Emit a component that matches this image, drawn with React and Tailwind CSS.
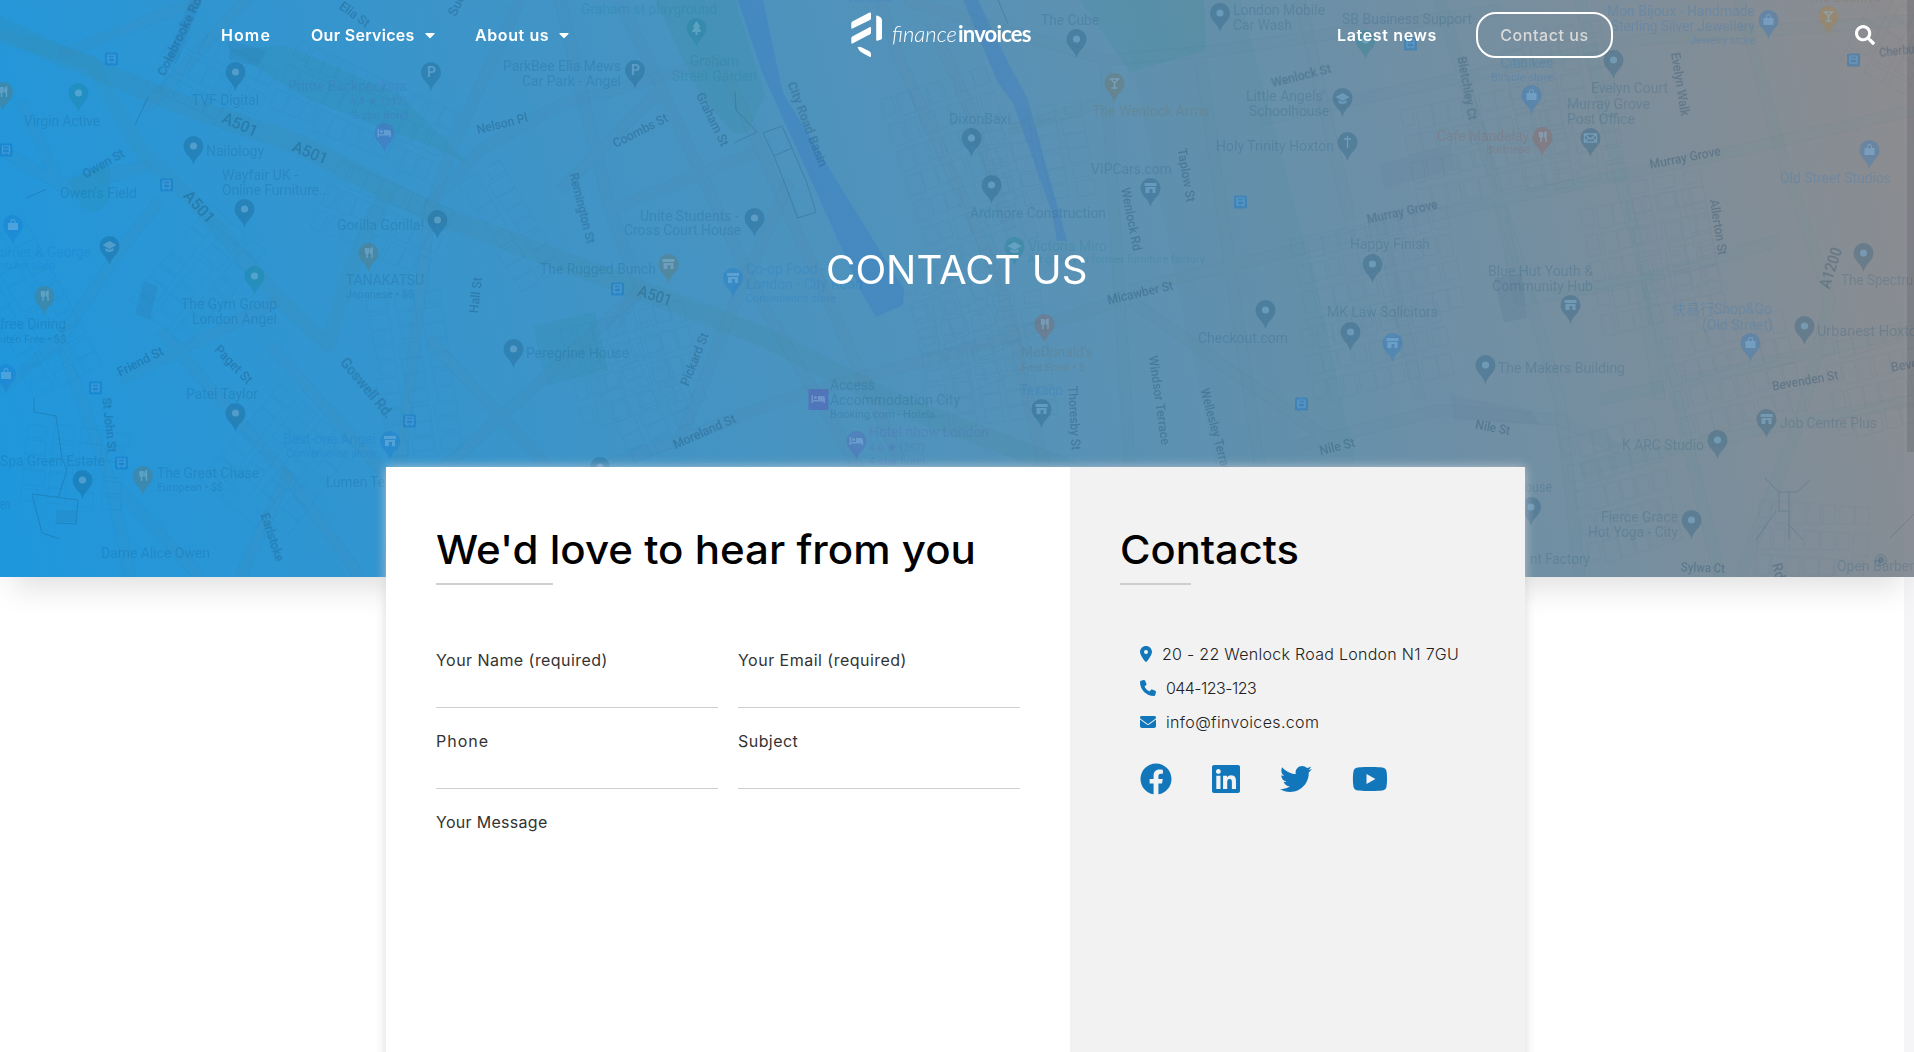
import React from "react";
import { FaCaretDown, FaSearch, FaFacebook, FaLinkedin, FaTwitter, FaYoutube } from "react-icons/fa";
import { FaLocationDot, FaPhone, FaEnvelope } from "react-icons/fa6";

const DARK = "#0b4a72";
const BLUE = "#0a6fd0";
const PURPLE = "#5a4fb8";
const BROWN = "#7a6238";
const TEAL = "#0a7a86";
const RED = "#a04a38";

/* label, x, baseline, width, size, colour */
const PLACES = [
  ["Virgin Active", 24, 126, 76, 14, DARK],
  ["TVF Digital", 192, 105, 67, 14, DARK],
  ["Prime Backpackers", 288, 91, 119, 14, PURPLE],
  ["4.1 ★ (212)", 350, 105, 57, 11, PURPLE],
  ["2-star hotel", 352, 119, 56, 11, PURPLE],
  ["Nailology", 206, 156, 58, 14, DARK],
  ["Wayfair UK -", 222, 180, 76, 14, DARK],
  ["Online Furniture...", 222, 195, 108, 14, DARK],
  ["Owen's Field", 60, 198, 77, 14, DARK],
  ["Gorilla Gorilla!", 337, 230, 87, 14, DARK],
  ["TANAKATSU", 346, 285, 78, 14, DARK],
  ["Japanese • $$", 346, 298, 68, 11, DARK],
  ["urner & George", 0, 257, 91, 14, BLUE],
  ["utcher shop", 0, 269, 55, 11, BLUE],
  ["ParkBee Elia Mews", 503, 71, 118, 14, DARK],
  ["Car Park - Angel", 522, 86, 99, 14, DARK],
  ["Graham st playground", 581, 14, 136, 14, TEAL],
  ["The Rugged Bunch", 540, 274, 116, 14, DARK],
  ["The Gym Group", 181, 309, 96, 14, DARK],
  ["London Angel", 192, 324, 85, 14, DARK],
  ["free Dining", 0, 329, 66, 14, DARK],
  ["uten Free • $$", 0, 343, 66, 11, DARK],
  ["Patel Taylor", 186, 399, 72, 14, DARK],
  ["Best-one Angel", 283, 444, 93, 14, BLUE],
  ["Convenience store", 286, 457, 90, 11, BLUE],
  ["Spa Green Estate", 0, 466, 105, 14, DARK],
  ["The Great Chase", 157, 478, 102, 14, DARK],
  ["European • $$", 157, 491, 66, 11, DARK],
  ["Lumen Te", 326, 487, 59, 14, DARK],
  ["Dame Alice Owen", 101, 558, 109, 14, DARK],
  ["en", 0, 509, 10, 14, DARK],
  ["Peregrine House", 526, 358, 103, 14, DARK],
  ["Graham", 690, 66, 49, 14, TEAL],
  ["Street Garden", 672, 81, 85, 14, TEAL],
  ["Unite Students -", 640, 221, 99, 14, DARK],
  ["Cross Court House", 624, 235, 117, 14, DARK],
  ["Co-op Food -", 746, 274, 79, 14, BLUE],
  ["London - City Road", 746, 289, 117, 14, BLUE],
  ["Convenience store", 746, 302, 90, 11, BLUE],
  ["Tea store", 848, 2, 44, 11, BLUE],
  ["The Cube", 1041, 25, 58, 14, DARK],
  ["London Mobile", 1233, 15, 92, 14, DARK],
  ["Car Wash", 1233, 30, 59, 14, DARK],
  ["The Wenlock Arms", 1092, 116, 117, 14, BROWN],
  ["DixonBaxi", 949, 124, 62, 14, DARK],
  ["Ardmore Construction", 970, 218, 136, 14, DARK],
  ["VIPCars.com", 1091, 174, 81, 14, DARK],
  ["Victoria Miro", 1028, 251, 79, 14, TEAL],
  ["Art gallery in former furniture factory", 1028, 263, 177, 11, TEAL],
  ["Little Angels'", 1246, 101, 79, 14, DARK],
  ["Schoolhouse", 1249, 116, 80, 14, DARK],
  ["Holy Trinity Hoxton", 1216, 151, 118, 14, DARK],
  ["Access", 830, 390, 45, 14, DARK],
  ["Accommodation City", 830, 405, 130, 14, DARK],
  ["Booking.com - Hotels", 830, 418, 105, 11, DARK],
  ["Hotel nhow London", 869, 437, 120, 14, PURPLE],
  ["4.6 ★ (397)", 869, 451, 56, 11, PURPLE],
  ["4-star hotel", 869, 465, 56, 11, PURPLE],
  ["McDonald's", 1021, 357, 72, 14, BROWN],
  ["Fast Food • $", 1021, 371, 64, 11, BROWN],
  ["Texaco", 1020, 395, 43, 14, BLUE],
  ["Checkout.com", 1198, 343, 90, 14, DARK],
  ["SB Business Support", 1342, 24, 130, 14, DARK],
  ["Mon Bijoux - Handmade", 1607, 16, 148, 14, BLUE],
  ["Sterling Silver Jewellery", 1611, 31, 144, 14, BLUE],
  ["Jewelry store", 1690, 44, 65, 11, BLUE],
  ["The Beehive", 1807, 2, 74, 14, BROWN],
  ["Citibikes", 1500, 68, 53, 14, BLUE],
  ["Bicycle store", 1491, 81, 62, 11, BLUE],
  ["Evelyn Court", 1591, 93, 77, 14, DARK],
  ["Murray Grove", 1567, 109, 83, 14, DARK],
  ["Post Office", 1567, 124, 68, 14, DARK],
  ["Cafe Mandalay", 1437, 141, 92, 14, RED],
  ["Burmese", 1486, 153, 44, 11, RED],
  ["Old Street Studios", 1780, 183, 111, 14, BLUE],
  ["Happy Finish", 1350, 249, 80, 14, DARK],
  ["The Spectrum", 1841, 285, 84, 14, DARK],
  ["Blue Hut Youth &", 1488, 276, 105, 14, DARK],
  ["Community Hub", 1492, 291, 101, 14, DARK],
  ["MK Law Solicitors", 1327, 317, 111, 14, DARK],
  ["The Makers Building", 1498, 373, 127, 14, DARK],
  ["快易行Shop&Go", 1672, 314, 100, 14, BLUE],
  ["(Old Street)", 1702, 330, 71, 14, BLUE],
  ["Urbanest Hoxton", 1817, 336, 108, 14, DARK],
  ["Job Centre Plus", 1780, 428, 97, 14, DARK],
  ["K ARC Studio", 1622, 450, 82, 14, DARK],
  ["Fierce Grace", 1601, 522, 77, 14, DARK],
  ["Hot Yoga - City", 1588, 537, 90, 14, DARK],
  ["ouse", 1525, 492, 27, 14, DARK],
  ["nt Factory", 1530, 564, 60, 14, DARK],
  ["Open Barber", 1837, 571, 77, 14, DARK],
];

/* label, centre x, centre y, rotation, width, size */
const ROADS = [
  ["A501", 240, 125, 24, 37, 16], ["A501", 310, 153, 22, 37, 16], ["A501", 199, 207, 48, 38, 16], ["A501", 655, 296, 18, 35, 16],
  ["Colebrooke Row", 181, 32, -64, 95, 13], ["Elia St", 355, 14, 36, 34, 13], ["Owen St", 103, 163, -29, 46, 13],
  ["Nelson Pl", 502, 123, -14, 52, 13], ["Coombs St", 640, 130, -27, 60, 13], ["Remington St", 583, 208, 76, 72, 13],
  ["Hall St", 475, 295, -84, 36, 13], ["Friend St", 140, 361, -27, 50, 13], ["Paget St", 234, 364, 46, 48, 13],
  ["Goswell Rd.", 367, 388, 50, 74, 14], ["St John St", 110, 425, 84, 55, 13], ["Earlstoke", 273, 537, 72, 50, 13],
  ["Graham St", 713, 119, 64, 58, 13], ["City Road Basin", 808, 124, 69, 90, 12], ["Taplow St", 1187, 175, 80, 54, 13],
  ["Wenlock Rd", 1132, 219, 79, 64, 13], ["Micawber St", 1140, 292, -13, 67, 13], ["Wenlock St", 1301, 75, -14, 61, 13],
  ["Pickard St", 694, 359, -68, 56, 13], ["Moreland St", 704, 431, -24, 67, 13], ["Thoresby St", 1075, 418, 87, 64, 13],
  ["Windsor Terrace", 1160, 400, 82, 90, 13], ["Wellesley Terrace", 1217, 433, 75, 92, 13], ["Bletchley Ct", 1468, 88, 80, 64, 13],
  ["Evelyn Walk", 1681, 84, 81, 64, 13], ["Murray Grove", 1685, 157, -11, 72, 13], ["Murray Grove", 1402, 211, -12, 72, 13],
  ["Allerton St", 1719, 227, 81, 56, 13], ["A1200", 1831, 268, -72, 42, 16], ["Nile St", 1493, 427, 11, 35, 13],
  ["Nile St", 1337, 446, -14, 36, 13], ["Bevenden St", 1805, 380, -10, 67, 13], ["Bevenden", 1918, 362, -10, 55, 13],
  ["Cherbury St", 1908, 49, -6, 58, 13], ["Sylwa Ct", 1703, 567, 2, 44, 13], ["Rd", 1779, 571, 75, 16, 14], ["Sudeley", 461, -6, -65, 46, 13],
];

/* centre x, centre y of the head, colour, symbol */
const PINS = [
  [3, 92, BROWN, "fork"], [78.5, 93, TEAL], [235.5, 72, DARK], [431, 72, DARK, "P"], [635, 70, DARK, "P"], [193.5, 146, DARK],
  [384.5, 133, PURPLE, "bed"], [244.5, 209, DARK], [437.5, 220, DARK], [368.5, 253, BROWN, "fork"], [13, 225, BLUE, "bag"],
  [109.5, 246, DARK, "cap"], [254.5, 276, TEAL], [44.5, 296, BROWN, "fork"], [235.5, 413, DARK], [390, 441, BLUE, "shop"],
  [82.5, 480, DARK], [143, 476, BROWN, "fork"], [513.5, 349, DARK], [6, 374, BLUE, "bag"], [696.5, 28, TEAL, "tree"],
  [754.5, 218, DARK], [668.5, 264, BROWN, "shop"], [733, 278, BLUE, "shop"], [1076.5, 39, DARK], [1220, 13, DARK],
  [1114.5, 83, BROWN, "glass"], [971.5, 138, DARK], [991.5, 185, DARK], [1150.5, 188, DARK, "shop"], [1014.5, 247, TEAL, "cap"],
  [856.5, 441, PURPLE, "bed"], [1044.5, 324, RED, "fork"], [1041.5, 409, DARK, "shop"], [1265.5, 310, DARK], [1365.5, 40, TEAL],
  [1768.5, 20, BLUE, "bag"], [1828.5, 16, "#c07c18", "glass"], [1531.5, 95, BLUE, "bag"], [1613.5, 60, DARK], [1590.5, 138, DARK, "mail"],
  [1342.5, 98, DARK, "cap"], [1347.5, 142, DARK, "cross"], [1542.5, 137, RED, "fork"], [1869.5, 150, BLUE, "bag"], [1372.5, 264, DARK],
  [1863.5, 253, DARK], [1570.5, 305, DARK, "shop"], [1350.5, 332, DARK], [1392.5, 343, BLUE, "shop"], [1485.5, 365, DARK],
  [1750.5, 343, BLUE, "bag"], [1804.5, 326, DARK], [1766.5, 419, DARK, "shop"], [1717.5, 440, DARK], [1691.5, 520, DARK],
  [1531, 507, DARK], [600, 467, DARK],
];

const STOPS = [[111.5, 59], [6, 150], [166.5, 185], [617.5, 289], [95.5, 388], [409.5, 421], [121.5, 463], [1240.5, 202], [1410.5, 44], [1853.5, 60], [1301.5, 404]];

const STREETS = [
  "M60 55L200 0M145 110L255 -10M150 165L60 185L20 100M0 150L70 190L150 165M430 205L480 150L560 105L720 60",
  "M520 0L455 140L430 210L385 600M560 0L610 210L640 290L610 330M620 0L760 300L860 470M660 90L560 190M610 210L760 150",
  "M720 60L900 460M880 0L900 60L1000 280L1045 470M905 0L1105 60L1130 470M1010 130L1110 100M1110 60L1220 50L1500 10",
  "M1130 290L1500 200L1740 150L1914 110M1200 60L1260 470M1260 120L1640 40L1914 20M1440 0L1500 200L1560 400L1580 577",
  "M1580 0L1620 180L1660 330L1720 577M1740 0L1780 150L1830 300L1800 420L1740 577M1600 400L1914 330M1580 470L1760 430L1914 400",
  "M1300 445L1440 410L1560 420L1620 450M1130 300L1330 440M930 20L970 110L1010 230M640 290L520 400L430 480M430 340L560 480",
  "M0 390L60 340L120 250L160 200M60 340L110 480L130 577M120 380L200 340L280 300M110 480L200 577M160 330L290 480L360 577",
  "M290 470L240 577M270 345L390 480M560 480L680 440L780 400M680 440L740 290L790 180M780 400L1000 340L1120 300",
  "M1500 205L1520 300L1640 280L1780 240M1640 280L1660 400M1380 220L1420 400M1300 0L1350 220",
];

/* x, y, rotation, columns, rows */
const LOTS = [
  [300, 40, 25, 11, 3], [180, 20, 28, 7, 3], [340, 160, 24, 8, 3], [500, 160, 60, 8, 2], [20, 210, 62, 11, 3], [130, 300, -50, 8, 3],
  [200, 480, -50, 8, 4], [440, 290, 82, 10, 3], [560, 330, -14, 8, 4], [650, 320, 66, 8, 3], [880, 100, -18, 7, 7], [900, 280, -20, 6, 5],
  [1040, 290, 82, 8, 5], [1080, 100, 80, 6, 4], [1290, 240, -12, 10, 4], [1300, 330, -12, 9, 3], [1400, 110, -11, 10, 4], [1600, 20, 80, 10, 4],
  [1580, 210, -11, 8, 5], [1700, 170, 80, 8, 3], [1660, 340, -14, 8, 4], [1560, 440, -14, 6, 5], [1760, 500, 4, 7, 4], [1840, 60, -62, 8, 3],
  [1820, 340, -12, 6, 4], [20, 500, -84, 5, 4],
];

function Symbol({ kind }) {
  const s = { stroke: "#8fc0e4", strokeWidth: 1.4, fill: "none", opacity: 0.45 };
  const f = { fill: "#8fc0e4", opacity: 0.42 };
  if (kind === "fork") return <path {...s} d="M-3 -5v4q0 1.500 1.500 1.500t1.500 -1.500v-4M-1.500 -5v10M3.500 5v-10q-2 1 -1.500 5h1.500" />;
  if (kind === "P") return <text x="-4" y="5" className="font-['Roboto'] text-[14px] font-bold" {...f}>P</text>;
  if (kind === "bed") return <path {...f} d="M-7 -4h1.500v5h5v-4h5q2 0 2 2v5h-1.500v-1.500h-10.500v1.500h-1.500zM-4.700 -1.500a1.600 1.600 0 1 1 3.200 0a1.600 1.600 0 1 1 -3.200 0z" />;
  if (kind === "bag") return <path {...f} d="M-5 -2h2.500v-1.500a2.500 2.500 0 0 1 5 0v1.500h2.500v7h-10zM-1.500 -2h3v-1.500a1.500 1.500 0 0 0 -3 0z" />;
  if (kind === "cap") return <path {...f} d="M-7 -1L0 -5L7 -1L0 3zM-4 2L0 4L4 2v3L0 6L-4 5z" />;
  if (kind === "shop") return <path {...f} d="M-6 -5h12v3h-12zM-5 -1h10v6h-3v-4h-3v4h-4z" />;
  if (kind === "tree") return <path {...f} d="M0 -7L4 -1H2L5 4H1V7H-1V4H-5L-2 -1H-4z" />;
  if (kind === "glass") return <path {...s} d="M-4 -4h8l-4 4zM0 0v5M-3 5h6" />;
  if (kind === "mail") return <path {...s} d="M-6 -4h12v8h-12zL0 1L6 -4M-6 4L-2 0M6 4L2 0" />;
  if (kind === "cross") return <path {...s} d="M0 -6v12M-3.500 -3h7" />;
  return <circle r="3.600" {...f} />;
}

function StreetMap() {
  return (
    <svg className="absolute inset-0 h-full w-full" viewBox="0 0 1914 577" aria-hidden="true">
      <g fill="#2a8a8a" opacity="0.13">
        <path d="M655 0H735L765 95L748 133L733 133L700 95ZM1080 0H1204L1206 50L1130 72Z" />
        <path d="M533 326L595 312L608 371L547 385ZM285 45L400 95L470 165L440 150L300 95L230 50ZM68 180L110 165V200Q95 220 80 205Z" />
      </g>
      <path d="M1120 0L1180 300L1240 577H1380L1320 300L1240 0Z" fill="#4f9096" opacity="0.08" />
      <g fill="#2f74c8" opacity="0.27">
        <path d="M738 0H763L783 93L904 290L903 305L876 317L862 293L762 72Z" />
        <path d="M963 0H978L1007 60L1028 100L1067 241H1057L1052 213L1013 103L998 83Z" />
      </g>
      <g fill="none" stroke="#3f8a9c" strokeLinejoin="round">
        <path d="M-10 22L60 55L170 100L300 145L430 212L640 290L760 335L900 405L1085 475" strokeWidth="20" opacity="0.17" />
        <path d="M0 36L90 62L140 150L199 207L280 300L328 345L350 270L388 190" strokeWidth="15" opacity="0.12" />
      </g>
      <g fill="none" strokeLinejoin="round">
        {STREETS.map((d, i) => (
          <g key={i}>
            <path d={d} stroke="#1c5278" strokeWidth="12" opacity="0.035" />
            <path d={d} stroke="#a8c4d4" strokeWidth="10" opacity="0.035" />
          </g>
        ))}
      </g>
      <g fill="none" stroke="#1c4f76" opacity="0.04">
        {LOTS.map(([x, y, r, n, m], i) => (
          <g key={i} transform={`translate(${x} ${y}) rotate(${r})`}>
            {Array.from({ length: n * m }, (_, k) => (
              <rect key={k} x={(k % n) * 16} y={Math.floor(k / n) * 27} width={12 + ((k * 7) % 4)} height={17 + ((k * 5) % 6)} />
            ))}
          </g>
        ))}
      </g>
      <g fill="#30557a" opacity="0.09">
        <path d="M144 281L158 286L150 320L135 314ZM228 40L266 50L258 66L230 60Z" />
        <path d="M1494 278L1521 274L1527 318L1504 322ZM56 510H76V522H56ZM166 60L190 0H202L176 64Z" />
        <path d="M1494 278L1521 274L1527 318L1504 322Z" />
      </g>
      <path d="M1380 165L1450 145L1456 170L1384 188ZM1450 395L1530 410L1540 425L1455 420Z" fill="#30557a" opacity="0.04" />
      <g fill="none" stroke="#174a6c" opacity="0.25">
        <path d="M148 97L135 125M26 198L47 189M34 398V412L56 416L62 458L67 470L58 498M32 494L78 500L76 524L55 523M32 494L42 533L60 539" />
        <path d="M735 92L736 110L757 132L734 143M763 133L782 126L792 148L774 156ZM774 156L798 218L816 212L806 180L803 174L792 148M998 0L1008 24" />
        <path d="M1765 478L1779 492H1797L1810 480M1779 492V511M1789 492V539M1778 511H1789M1776 511L1756 540M1789 525L1803 540M1890 538L1914 514" opacity="0.8" />
        <circle cx="1881" cy="560" r="5.500" />
        <circle cx="1881" cy="560" r="3" fill="#174a6c" />
      </g>
      {STOPS.map(([x, y], i) => (
        <g key={i} transform={`translate(${x} ${y})`}>
          <rect x="-6.500" y="-6.500" width="13" height="13" rx="1.500" fill="#0570c8" opacity="0.36" />
          <path d="M-3.500 -4h7v7h-7zM-3.500 -1h7M-2.500 3v1.500M2.500 3v1.500" fill="none" stroke="#7db8e4" strokeWidth="1.200" opacity="0.45" />
        </g>
      ))}
      {PINS.map(([x, y, c, kind], i) => (
        <g key={i} transform={`translate(${x} ${y})`}>
          <path d="M0 19C-1.500 11 -10 8 -10 0A10 10 0 0 1 10 0C10 8 1.500 11 0 19Z" fill={c} opacity="0.25" />
          <Symbol kind={kind} />
        </g>
      ))}
      <g transform="translate(818.5 399)">
        <rect x="-10" y="-10" width="20" height="21" fill={PURPLE} opacity="0.42" />
        <Symbol kind="bed" />
      </g>
      <g className="font-['Roboto','Noto_Sans_CJK_SC',sans-serif]" opacity="0.17">
        {PLACES.map(([t, x, y, w, s, c], i) => (
          <text key={i} x={x} y={y} fontSize={s} textLength={w} lengthAdjust="spacingAndGlyphs" fill={c}>{t}</text>
        ))}
      </g>
      <g className="font-['Roboto',sans-serif] font-medium" fill="#123f60" opacity="0.27">
        {ROADS.map(([t, x, y, r, w, s], i) => (
          <text key={i} transform={`translate(${x} ${y}) rotate(${r})`} x={-w / 2} y="5" fontSize={s} textLength={w} lengthAdjust="spacingAndGlyphs">{t}</text>
        ))}
      </g>
    </svg>
  );
}

function Logo() {
  return (
    <a className="flex h-[58px] w-[179px] items-center text-white">
      <svg className="mt-[11px] h-[46px] w-[33px] shrink-0" viewBox="0 0 33 46" fill="currentColor">
        <path d="M0.300 11.500Q0.300 10.300 1.300 9.600L18.500 0.600Q20 0 20 1.500V6.300Q20 7.300 19 7.900L1.500 16.600Q0.300 17.200 0.300 15.800Z" />
        <path d="M0.300 26.300Q0.300 25.200 1.300 24.600L18.500 15.200Q20 14.500 20 16V20.600Q20 21.600 19 22.200L1.500 31.500Q0.300 32 0.300 30.600Z" />
        <path d="M25.200 4.300Q25.200 3.200 26.200 3.500Q31 5 31 8.500V26.200Q31 27 30 27.400L26.400 28.700Q25.200 29.100 25.200 27.800Z" />
        <path d="M6.500 35.500Q8 34.300 10.500 35.200L18 39Q20 40 20 42V44Q20 45.500 18.500 44.800L11.500 41Q8 39 6.500 35.500Z" />
      </svg>
      <span className="ml-[8px] mt-[9px] flex items-baseline whitespace-nowrap font-['Lato'] text-[22px] leading-[30px]">
        <span className="w-[66px] font-light italic">finance</span>
        <span className="font-bold tracking-[-0.8px]">invoices</span>
      </span>
    </a>
  );
}

function Header() {
  return (
    <header className="relative flex h-[70px] items-start whitespace-nowrap text-base font-semibold leading-[70px] text-white">
      <nav className="ml-[221px] flex w-[630px]">
        <a className="w-[90px] tracking-[1.1px]">Home</a>
        <a className="flex w-[164px] items-center"><span className="w-[111px] tracking-[0.3px]">Our Services</span><FaCaretDown className="size-4" /></a>
        <a className="flex items-center"><span className="w-[81px] tracking-[0.6px]">About us</span><FaCaretDown className="size-4" /></a>
      </nav>
      <Logo />
      <nav className="ml-[307px] flex">
        <a className="w-[139px] tracking-[0.65px]">Latest news</a>
        <a className="mt-3 h-[46px] w-[137px] rounded-[20px] border-2 border-white text-center font-medium leading-[42px] tracking-[0.55px] text-[#d9d9d9]">Contact us</a>
      </nav>
      <FaSearch className="ml-[242px] mt-[25px] size-5" />
    </header>
  );
}

const FIELD = "mb-5 h-[61px] border-b border-[#cfcfcf] leading-[26px]";

export default function App() {
  return (
    <div className="relative h-[1052px] w-full overflow-hidden bg-white font-['Inter','Noto_Sans',sans-serif] text-base text-[#333]">
      <section className="relative h-[577px] bg-[linear-gradient(76deg,#1e97dd_0%,#5592b8_52%,#8e8c8e_100%)] shadow-[0_22px_30px_-12px_rgba(0,0,0,0.13)]">
        <StreetMap />
        <Header />
        <h1 className="relative mt-[170px] w-fit origin-left scale-x-[1.03] pl-[802px] text-[39px] leading-[60px] text-white">CONTACT US</h1>
      </section>
      <main className="relative ml-[386px] mt-[-110px] flex h-[640px] w-[1139px] shadow-[0_0_10px_rgba(204,208,212,0.8)]">
        <section className="w-[684px] bg-white pl-[50px] pt-[53px]">
          <h2 className="w-fit origin-left scale-x-[1.078] whitespace-nowrap text-[39px] font-medium leading-[60px] text-black">We'd love to hear from you</h2>
          <div className="mt-[3px] h-0.5 w-[117px] bg-[#cfcfcf]" />
          <form className="mt-[62px] w-[584px]">
            <div className="grid grid-cols-2 gap-x-5">
              <label className={FIELD}><span className="tracking-[0.45px]">Your Name (required)</span></label>
              <label className={FIELD}><span className="tracking-[0.48px]">Your Email (required)</span></label>
              <label className={FIELD}><span className="tracking-[1px]">Phone</span></label>
              <label className={FIELD}><span className="tracking-[0.45px]">Subject</span></label>
            </div>
            <label className="block leading-[26px] tracking-[0.3px]">Your Message</label>
          </form>
        </section>
        <aside className="w-[455px] bg-[#f2f2f2] pl-[50px] pt-[53px]">
          <h2 className="w-fit origin-left scale-x-[1.067] text-[39px] font-medium leading-[60px] text-black">Contacts</h2>
          <div className="mt-[3px] h-0.5 w-[71px] bg-[#cfcfcf]" />
          <ul className="ml-5 mt-[52px] whitespace-nowrap font-light leading-[34px] text-[#222]">
            <li className="flex items-center"><FaLocationDot className="mr-[10px] h-4 w-3 text-[#1276bb]" /><span className="tracking-[0.28px]">20 - 22 Wenlock Road London N1 7GU</span></li>
            <li className="flex items-center"><FaPhone className="mr-[10px] size-4 text-[#1276bb]" /><span className="tracking-[-0.55px]">044-123-123</span></li>
            <li className="flex items-center"><FaEnvelope className="mr-[10px] size-4 text-[#1276bb]" /><span className="tracking-[0.35px]">info@finvoices.com</span></li>
          </ul>
          <div className="ml-5 mt-[24px] flex h-8 items-center gap-10 text-[#1276bb]">
            <FaFacebook className="size-8" />
            <FaLinkedin className="h-8 w-7" />
            <FaTwitter className="size-8" />
            <FaYoutube className="h-8 w-9" />
          </div>
        </aside>
      </main>
      <div className="absolute inset-y-0 right-0 w-[10px] bg-gray-400/10">
        <div className="ml-[3px] h-[452px] bg-black/10" />
      </div>
    </div>
  );
}
